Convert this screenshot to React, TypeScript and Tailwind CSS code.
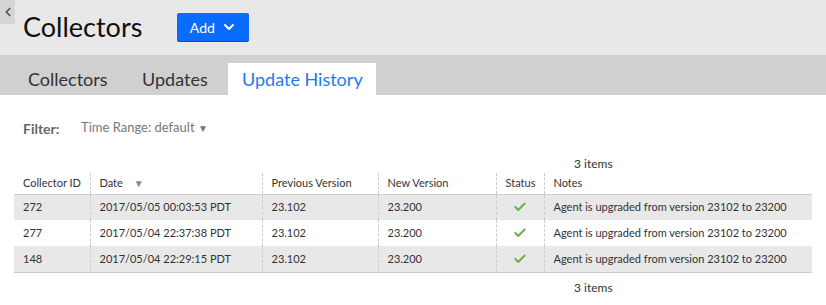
import { ChevronDown, ChevronLeft, Check } from "lucide-react";

const rows = [
  { id: "272", date: "2017/05/05 00:03:53 PDT" },
  { id: "277", date: "2017/05/04 22:37:38 PDT" },
  { id: "148", date: "2017/05/04 22:29:15 PDT" },
];

export default function App() {
  return (
    <main className="w-[826px] h-[305px] overflow-hidden bg-white text-[#333] font-['Lato','Noto_Sans',sans-serif]">
      {/* Header */}
      <header className="h-[55px] bg-[#e8e8e8] flex items-start">
        <button className="w-[15px] h-[24px] bg-[#d6d6d6] flex items-center justify-center text-[#555]">
          <ChevronLeft size={14} strokeWidth={3} />
        </button>
        <h1 className="ml-[8px] mt-[11px] text-[27px] leading-[32px] text-[#111]">Collectors</h1>
        <button className="ml-[35px] mt-[13px] w-[72px] h-[28px] bg-[#0a6cff] rounded-[2px] text-white text-[14px] flex items-center justify-center gap-[6px] shadow-[0_1px_0_#0550c0]">
          Add <ChevronDown size={16} strokeWidth={3} />
        </button>
      </header>

      {/* Tabs */}
      <nav className="h-[40px] bg-[#d0d0d0] flex items-end pl-[14px] text-[18px] whitespace-nowrap">
        <div className="w-[114px] shrink-0 h-[32px] px-[14px] flex items-center text-[#333]">Collectors</div>
        <div className="w-[100px] shrink-0 h-[32px] px-[14px] flex items-center text-[#333]">Updates</div>
        <div className="w-[148px] shrink-0 h-[32px] pl-[14px] flex items-center bg-white text-[#1a7cf0]">Update History</div>
      </nav>

      <section className="px-[14px] pt-[24px]">
        {/* Filter */}
        <div className="flex items-center h-[18px] pl-[9px]">
          <span className="font-bold text-[14px] text-[#666] w-[58px]">Filter:</span>
          <span className="text-[13px] text-[#777]">Time Range: default <span className="text-[10px]">▼</span></span>
        </div>

        <div className="mt-[18px] h-[18px] pl-[560px] text-[12px] text-[#333] leading-[18px]">3 items</div>

        {/* Table */}
        <table className="w-[798px] border-collapse text-[11px] table-fixed">
          <colgroup>
            <col className="w-[76px]" />
            <col className="w-[172px]" />
            <col className="w-[116px]" />
            <col className="w-[118px]" />
            <col className="w-[48px]" />
            <col className="w-[268px]" />
          </colgroup>
          <thead>
            <tr className="h-[21px] border-b border-[#ccc] text-left">
              <th className="font-normal pl-[9px] whitespace-nowrap">Collector ID</th>
              <th className="font-normal pl-[9px] border-l border-dashed border-[#ccc]">
                Date <span className="ml-[8px] text-[10px] text-[#888]">▼</span>
              </th>
              <th className="font-normal pl-[9px] border-l border-dashed border-[#ccc]">Previous Version</th>
              <th className="font-normal pl-[9px] border-l border-dashed border-[#ccc]">New Version</th>
              <th className="font-normal pl-[9px] border-l border-dashed border-[#ccc]">Status</th>
              <th className="font-normal pl-[9px] border-l border-dashed border-[#ccc]">Notes</th>
            </tr>
          </thead>
          <tbody>
            {rows.map((r, i) => (
              <tr key={r.id} className={`h-[26px] ${i % 2 === 0 ? "bg-[#e8e8e8]" : "bg-white"}`}>
                <td className="pl-[9px]">{r.id}</td>
                <td className="pl-[9px] border-l border-dashed border-[#ccc]">{r.date}</td>
                <td className="pl-[9px] border-l border-dashed border-[#ccc]">23.102</td>
                <td className="pl-[9px] border-l border-dashed border-[#ccc]">23.200</td>
                <td className="border-l border-dashed border-[#ccc]">
                  <div className="flex justify-center text-[#6ab04c]">
                    <Check size={14} strokeWidth={3.5} />
                  </div>
                </td>
                <td className="pl-[9px] border-l border-dashed border-[#ccc] whitespace-nowrap">
                  Agent is upgraded from version 23102 to 23200
                </td>
              </tr>
            ))}
          </tbody>
        </table>
        <div className="border-t border-[#ccc] w-[798px]" />

        <div className="mt-[6px] pl-[560px] text-[12px] leading-[18px]">3 items</div>
      </section>
    </main>
  );
}
